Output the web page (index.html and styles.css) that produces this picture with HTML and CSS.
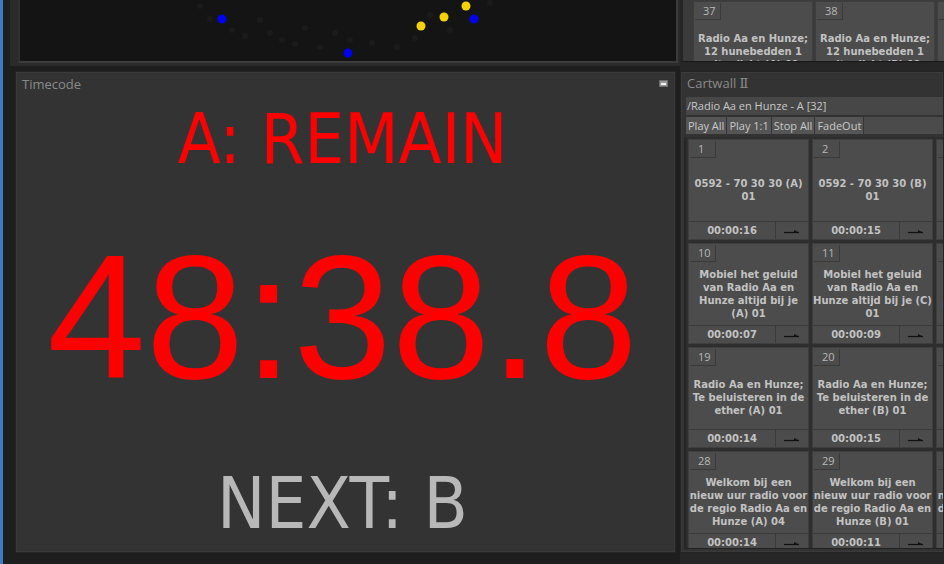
FILE: index.html
```html
<!DOCTYPE html>
<html>
<head>
<meta charset="utf-8">
<link rel="stylesheet" href="styles.css">
</head>
<body>
<div class="app">
  <div class="edge"></div>
  <div class="leftcol">
    <div class="dots-wrap">
      <div class="dots">
        <svg width="656" height="61" viewBox="0 0 656 61">
          <g fill="#1b1b1b">
            <circle cx="180" cy="6" r="3"/><circle cx="190" cy="19" r="3"/><circle cx="212" cy="30" r="3"/>
            <circle cx="225" cy="36" r="3"/><circle cx="250" cy="33" r="3"/><circle cx="262" cy="40" r="3"/>
            <circle cx="275" cy="44" r="3"/><circle cx="300" cy="47" r="3"/><circle cx="330" cy="40" r="3"/>
            <circle cx="352" cy="43" r="3"/><circle cx="377" cy="47" r="3"/><circle cx="395" cy="38" r="3"/>
            <circle cx="410" cy="15" r="3"/><circle cx="430" cy="30" r="3"/><circle cx="470" cy="3" r="3"/>
            <circle cx="240" cy="20" r="3"/><circle cx="285" cy="28" r="3"/><circle cx="315" cy="33" r="3"/>
          </g>
          <g fill="#0000f0">
            <circle cx="202" cy="19" r="4.5"/><circle cx="328" cy="53" r="4.5"/><circle cx="454" cy="19" r="4.5"/>
          </g>
          <g fill="#f6d200">
            <circle cx="401" cy="26" r="4.5"/><circle cx="424" cy="17" r="4.5"/><circle cx="446" cy="6" r="4.5"/>
          </g>
        </svg>
      </div>
    </div>
    <section class="panel timecode">
      <header class="ph"><span class="ptitle">Timecode</span><span class="minbtn"></span></header>
      <div class="tc-body">
        <div class="tc-label">A: REMAIN</div>
        <div class="tc-time">48:38.8</div>
        <div class="tc-next">NEXT: B</div>
      </div>
    </section>
  </div>
  <div class="rightcol">
    <div class="topcarts">
      <div class="cell top-cell">
        <div class="tab">37</div>
        <div class="title">Radio Aa en Hunze;<br>12 hunebedden 1<br>uitgelicht (A) 01</div>
        <div class="foot"><div class="time">00:00:12</div><div class="arrow"></div></div>
      </div>
      <div class="cell top-cell">
        <div class="tab">38</div>
        <div class="title">Radio Aa en Hunze;<br>12 hunebedden 1<br>uitgelicht (B) 02</div>
        <div class="foot"><div class="time">00:00:12</div><div class="arrow"></div></div>
      </div>
      <div class="cell top-cell">
        <div class="tab">39</div>
        <div class="title">Tune (A) 01</div>
        <div class="foot"><div class="time">00:00:10</div><div class="arrow"></div></div>
      </div>
    </div>
    <section class="panel cartwall">
      <header class="ph"><span class="ptitle">Cartwall <span class="roman">Ⅱ</span></span></header>
      <div class="path">/Radio Aa en Hunze - A [32]</div>
      <div class="btnrow">
        <span class="btn">Play All</span><span class="btn">Play 1:1</span><span class="btn">Stop All</span><span class="btn">FadeOut</span>
      </div>
      <div class="grid">
        <div class="cell"><div class="tab">1</div><div class="title">0592 - 70 30 30 (A)<br>01</div><div class="foot"><div class="time">00:00:16</div><div class="arrow"><svg width="16" height="6" viewBox="0 0 16 6"><path d="M0 4.5H15" stroke="#101010" stroke-width="1.2"/><path d="M10 2L15 4.5L10 4.5Z" fill="#101010"/></svg></div></div></div>
        <div class="cell"><div class="tab">2</div><div class="title">0592 - 70 30 30 (B)<br>01</div><div class="foot"><div class="time">00:00:15</div><div class="arrow"><svg width="16" height="6" viewBox="0 0 16 6"><path d="M0 4.5H15" stroke="#101010" stroke-width="1.2"/><path d="M10 2L15 4.5L10 4.5Z" fill="#101010"/></svg></div></div></div>
        <div class="cell"><div class="tab">3</div><div class="title">Tune (A) 01</div><div class="foot"><div class="time">00:00:08</div><div class="arrow"></div></div></div>

        <div class="cell"><div class="tab">10</div><div class="title">Mobiel het geluid<br>van Radio Aa en<br>Hunze altijd bij je<br>(A) 01</div><div class="foot"><div class="time">00:00:07</div><div class="arrow"><svg width="16" height="6" viewBox="0 0 16 6"><path d="M0 4.5H15" stroke="#101010" stroke-width="1.2"/><path d="M10 2L15 4.5L10 4.5Z" fill="#101010"/></svg></div></div></div>
        <div class="cell"><div class="tab">11</div><div class="title">Mobiel het geluid<br>van Radio Aa en<br>Hunze altijd bij je (C)<br>01</div><div class="foot"><div class="time">00:00:09</div><div class="arrow"><svg width="16" height="6" viewBox="0 0 16 6"><path d="M0 4.5H15" stroke="#101010" stroke-width="1.2"/><path d="M10 2L15 4.5L10 4.5Z" fill="#101010"/></svg></div></div></div>
        <div class="cell"><div class="tab">12</div><div class="title">Nieuws<br>Radio Aa<br>Drentse muziek (A)</div><div class="foot"><div class="time">00:00:06</div><div class="arrow"></div></div></div>

        <div class="cell"><div class="tab">19</div><div class="title">Radio Aa en Hunze;<br>Te beluisteren in de<br>ether (A) 01</div><div class="foot"><div class="time">00:00:14</div><div class="arrow"><svg width="16" height="6" viewBox="0 0 16 6"><path d="M0 4.5H15" stroke="#101010" stroke-width="1.2"/><path d="M10 2L15 4.5L10 4.5Z" fill="#101010"/></svg></div></div></div>
        <div class="cell"><div class="tab">20</div><div class="title">Radio Aa en Hunze;<br>Te beluisteren in de<br>ether (B) 01</div><div class="foot"><div class="time">00:00:15</div><div class="arrow"><svg width="16" height="6" viewBox="0 0 16 6"><path d="M0 4.5H15" stroke="#101010" stroke-width="1.2"/><path d="M10 2L15 4.5L10 4.5Z" fill="#101010"/></svg></div></div></div>
        <div class="cell"><div class="tab">21</div><div class="title">Tune (B) 01</div><div class="foot"><div class="time">00:00:10</div><div class="arrow"></div></div></div>

        <div class="cell"><div class="tab">28</div><div class="title">Welkom bij een<br>nieuw uur radio voor<br>de regio Radio Aa en<br>Hunze (A) 04</div><div class="foot"><div class="time">00:00:14</div><div class="arrow"><svg width="16" height="6" viewBox="0 0 16 6"><path d="M0 4.5H15" stroke="#101010" stroke-width="1.2"/><path d="M10 2L15 4.5L10 4.5Z" fill="#101010"/></svg></div></div></div>
        <div class="cell"><div class="tab">29</div><div class="title">Welkom bij een<br>nieuw uur radio voor<br>de regio Radio Aa en<br>Hunze (B) 01</div><div class="foot"><div class="time">00:00:11</div><div class="arrow"><svg width="16" height="6" viewBox="0 0 16 6"><path d="M0 4.5H15" stroke="#101010" stroke-width="1.2"/><path d="M10 2L15 4.5L10 4.5Z" fill="#101010"/></svg></div></div></div>
        <div class="cell"><div class="tab">30</div><div class="title">Welkom bij een<br>nieuw uur radio voor<br>de regio Radio Aa en<br>Hunze (C) 01</div><div class="foot"><div class="time">00:00:12</div><div class="arrow"></div></div></div>
      </div>
    </section>
  </div>
</div>
</body>
</html>
```

FILE: styles.css
```css
body {
  margin: 0;
  width: 944px;
  height: 564px;
  overflow: hidden;
  background: #1c1c1c;
}

.app {
  display: flex;
  height: 564px;
}

.edge {
  width: 3px;
  flex: none;
  background: #3c7cc4;
}

.leftcol {
  width: 677px;
  flex: none;
  background: #1e1e1e;
  display: flex;
  flex-direction: column;
}

.dots-wrap {
  margin-left: 7px;
  height: 66px;
  box-sizing: border-box;
  padding: 0 2px 3px 8px;
  background: #2a2a2a;
}

.dots {
  height: 63px;
  box-sizing: border-box;
  background: #141414;
  border-left: 2px solid #303030;
  border-right: 2px solid #3c3c3c;
  border-bottom: 2px solid #3c3c3c;
  overflow: hidden;
}

.dots svg {
  display: block;
}

.panel {
  background: #333333;
  border: 1px solid #242424;
  box-shadow: inset 0 0 0 1px #3a3a3a;
  display: flex;
  flex-direction: column;
  box-sizing: border-box;
  height: 482px;
}

.timecode {
  margin: 5px 0 0 12px;
  width: 661px;
}

.ph {
  height: 25px;
  flex: none;
  display: flex;
  align-items: center;
  justify-content: space-between;
  padding: 0 7px 0 6px;
}

.ptitle {
  font-family: "Open Sans", "DejaVu Sans", sans-serif;
  font-size: 13px;
  line-height: 18px;
  margin-top: -2px;
  color: #8a8a8a;
  white-space: nowrap;
}

.roman {
  font-family: "DejaVu Serif", "Liberation Serif", serif;
  font-size: 13px;
}

.minbtn {
  width: 9px;
  height: 7px;
  box-sizing: border-box;
  background: #9a9a9a;
  border: 1px solid #6c6c6c;
  display: flex;
  align-items: center;
  justify-content: center;
  margin-top: -2px;
}

.minbtn::after {
  content: "";
  width: 5px;
  height: 2px;
  background: #f0f0f0;
}

.tc-body {
  flex: 1;
  display: flex;
  flex-direction: column;
  align-items: center;
  padding-right: 6px;
}

.tc-label {
  margin-top: 7px;
  font-family: "DejaVu Sans Condensed", "DejaVu Sans", sans-serif;
  font-stretch: condensed;
  font-size: 70px;
  line-height: 70px;
  color: #ff0000;
  white-space: nowrap;
}

.tc-time {
  margin-top: 55px;
  font-family: "Liberation Sans", Arial, sans-serif;
  font-size: 177px;
  line-height: 177px;
  color: #ff0000;
  white-space: nowrap;
}

.tc-next {
  margin-top: 61px;
  font-family: "DejaVu Sans Condensed", "DejaVu Sans", sans-serif;
  font-stretch: condensed;
  font-size: 72px;
  line-height: 72px;
  color: #b8b8b8;
  white-space: nowrap;
}

.rightcol {
  width: 264px;
  flex: none;
  background: #262626;
  display: flex;
  flex-direction: column;
}

.topcarts {
  height: 61px;
  flex: none;
  overflow: hidden;
  display: flex;
  gap: 2px;
  background: #3b3b3b;
  border-left: 3px solid #262626;
  border-bottom: 1px solid #181818;
  padding-left: 10px;
  margin-bottom: 9px;
}

.top-cell {
  width: 120px;
  height: 100px;
  flex: none;
  margin-top: 1px;
}

.cartwall {
  width: 264px;
}

.path {
  margin-left: 5px;
  height: 18px;
  flex: none;
  background: #474747;
  font-family: "Open Sans", "DejaVu Sans", sans-serif;
  font-size: 11px;
  line-height: 18px;
  color: #c8c8c8;
  padding-left: 1px;
  white-space: nowrap;
}

.btnrow {
  margin: 2px 0 0 5px;
  height: 17px;
  flex: none;
  display: flex;
  background: #4b4b4b;
}

.btn {
  padding: 0 2px;
  font-family: "Open Sans", "DejaVu Sans", sans-serif;
  font-size: 11px;
  line-height: 17px;
  color: #c8c8c8;
  background: #555555;
  border-right: 1px solid #363636;
  white-space: nowrap;
}

.grid {
  margin: 3px 0 0 3px;
  height: 412px;
  flex: none;
  box-sizing: border-box;
  padding: 2px 0 0 2px;
  border-left: 2px solid #262626;
  border-bottom: 1px solid #222222;
  background: #2e2e2e;
  display: grid;
  grid-template-columns: repeat(3, 121px);
  grid-auto-rows: 101px;
  gap: 3px;
  overflow: hidden;
}

.cell {
  background: #4c4c4c;
  border: 1px solid #3e3e3e;
  box-sizing: border-box;
  display: flex;
  flex-direction: column;
  overflow: hidden;
}

.tab {
  width: 26px;
  height: 17px;
  flex: none;
  box-sizing: border-box;
  margin: 1px 0 0 1px;
  border-right: 1px solid #3a3a3a;
  border-bottom: 1px solid #3a3a3a;
  padding-left: 8px;
  font-family: "Open Sans", "DejaVu Sans", sans-serif;
  font-size: 11px;
  line-height: 16px;
  color: #b8b8b8;
}

.title {
  flex: 1;
  display: flex;
  align-items: center;
  justify-content: center;
  text-align: center;
  white-space: nowrap;
  font-family: "DejaVu Sans", sans-serif;
  font-weight: bold;
  font-size: 10px;
  line-height: 13px;
  color: #c2c2c2;
}

.foot {
  height: 18px;
  flex: none;
  box-sizing: border-box;
  border-top: 1px solid #3a3a3a;
  display: flex;
}

.time {
  width: 86px;
  flex: none;
  text-align: center;
  font-family: "DejaVu Sans", sans-serif;
  font-weight: bold;
  font-size: 10px;
  line-height: 17px;
  color: #c2c2c2;
}

.arrow {
  flex: 1;
  border-left: 1px solid #3a3a3a;
  display: flex;
  align-items: center;
  justify-content: center;
}

.arrow svg {
  display: block;
}
```
